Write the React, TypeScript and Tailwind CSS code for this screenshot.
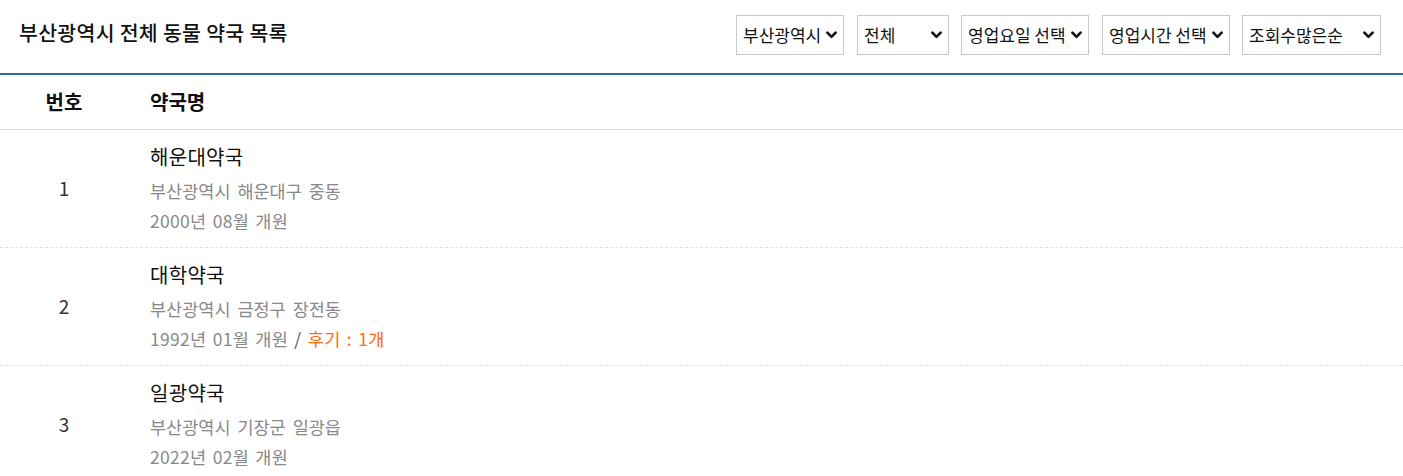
import React from 'react';

const FONT = { fontFamily: '"Noto Sans CJK KR", "Noto Sans", sans-serif' };

const filters = [
  { label: '부산광역시', width: 'w-[108px]', ml: '' },
  { label: '전체', width: 'w-[92px]', ml: 'ml-[13px]' },
  { label: '영업요일 선택', width: 'w-[128px]', ml: 'ml-[12px]' },
  { label: '영업시간 선택', width: 'w-[128px]', ml: 'ml-[13px]' },
  { label: '조회수많은순', width: 'w-[139px]', ml: 'ml-[12px]' },
];

const pharmacies = [
  { no: 1, name: '해운대약국', addr: '부산광역시 해운대구 중동', opened: '2000년 08월 개원', reviews: 0 },
  { no: 2, name: '대학약국', addr: '부산광역시 금정구 장전동', opened: '1992년 01월 개원', reviews: 1 },
  { no: 3, name: '일광약국', addr: '부산광역시 기장군 일광읍', opened: '2022년 02월 개원', reviews: 0 },
];

function Chevron() {
  return (
    <svg width="11" height="8" viewBox="0 0 11 8" className="shrink-0">
      <path d="M1.4 1.6 L5.5 5.8 L9.6 1.6" fill="none" stroke="#111" strokeWidth="2.6" strokeLinecap="round" strokeLinejoin="round" />
    </svg>
  );
}

function FilterSelect({ label, width, ml }: { label: string; width: string; ml: string }) {
  return (
    <div className={`${width} ${ml} h-[40px] border border-[#c8c8c8] bg-white flex items-center justify-between pl-[6px] pr-[6px]`}>
      <span className="text-[17px] text-[#111] whitespace-nowrap">{label}</span>
      <Chevron />
    </div>
  );
}

export default function App() {
  return (
    <div className="w-[1403px] h-[476px] bg-white overflow-hidden" style={FONT}>
      <div className="h-[75px] border-b-2 border-[#336699] flex items-start justify-between">
        <h1 className="pl-[19px] pt-[17px] text-[20.5px] leading-[30px] font-medium text-[#111] tracking-[0.3px]">
          부산광역시 전체 동물 약국 목록
        </h1>
        <div className="flex pt-[15px] pr-[22px]">
          {filters.map((f) => (
            <FilterSelect key={f.label} {...f} />
          ))}
        </div>
      </div>

      <div className="flex h-[55px] items-center border-b border-[#dddddd] text-[20px] font-bold text-[#111]">
        <div className="w-[128px] text-center">번호</div>
        <div className="pl-[22px]">약국명</div>
      </div>

      {pharmacies.map((p) => (
        <div key={p.no} className="flex items-center border-b border-dashed border-[#e2e2e2]">
          <div className="w-[128px] text-center text-[19px] text-[#333]">{p.no}</div>
          <div className="pl-[22px] pt-[12px] pb-[11px]">
            <div className="text-[20px] leading-[30px] text-[#111] tracking-[0.3px]">{p.name}</div>
            <div className="mt-[4px] text-[17.5px] leading-[30px] text-[#888] [word-spacing:3px]">{p.addr}</div>
            <div className="text-[17.5px] leading-[30px] text-[#888] tracking-[0.3px] [word-spacing:2px]">
              {p.opened}
              {p.reviews > 0 && (
                <>
                  {' '}
                  <span className="text-[#555]">/</span>{' '}
                  <span className="text-[#ff6a13]">후기 : {p.reviews}개</span>
                </>
              )}
            </div>
          </div>
        </div>
      ))}
    </div>
  );
}
